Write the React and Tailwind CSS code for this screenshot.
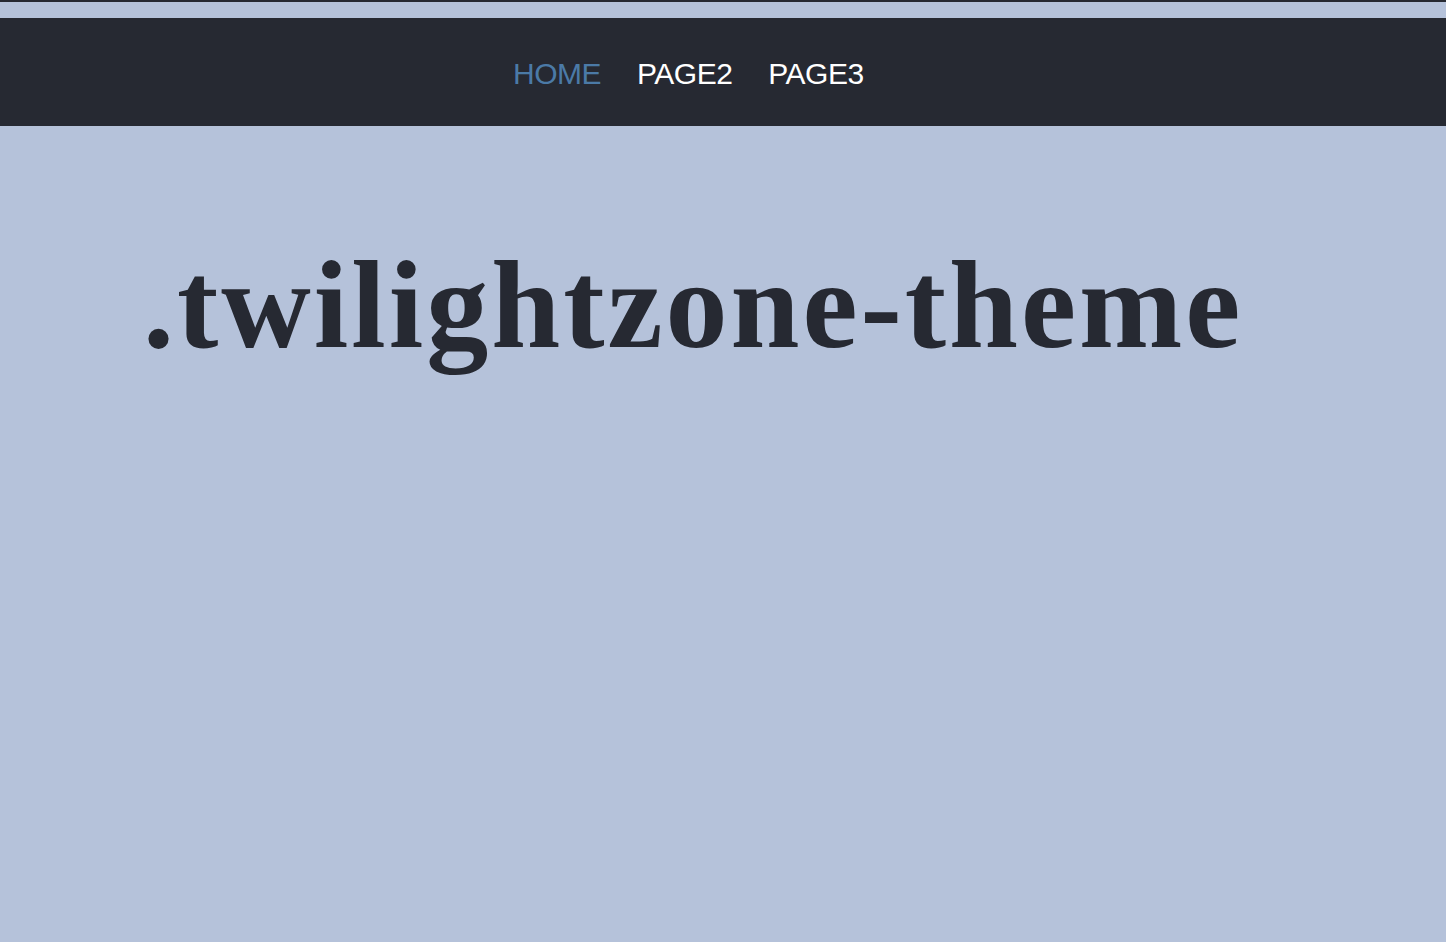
import React from 'react';

const links = [
  { label: 'HOME', active: true },
  { label: 'PAGE2' },
  { label: 'PAGE3' },
];

export default function App() {
  return (
    <div className="min-h-[942px] bg-[#b5c2da] border-t-2 border-[#262932]">
      {/* Nav bar */}
      <div className="mt-[16px] h-[108px] bg-[#262932] flex items-center pl-[513px]">
        <nav className="flex gap-[36px] font-['Liberation_Sans',sans-serif] text-[30px] leading-none pt-[4px] tracking-[-0.5px]">
          {links.map((link) => (
            <a
              key={link.label}
              href="#"
              className={link.active ? 'text-[#4b7aa7]' : 'text-white'}
            >
              {link.label}
            </a>
          ))}
        </nav>
      </div>

      {/* Title */}
      <div className="pl-[143px] pt-[118px]">
        <h1 className="font-['Liberation_Serif',serif] font-bold text-[#262932] text-[124px] leading-none tracking-[3px]">
          .twilightzone-theme
        </h1>
      </div>
    </div>
  );
}
